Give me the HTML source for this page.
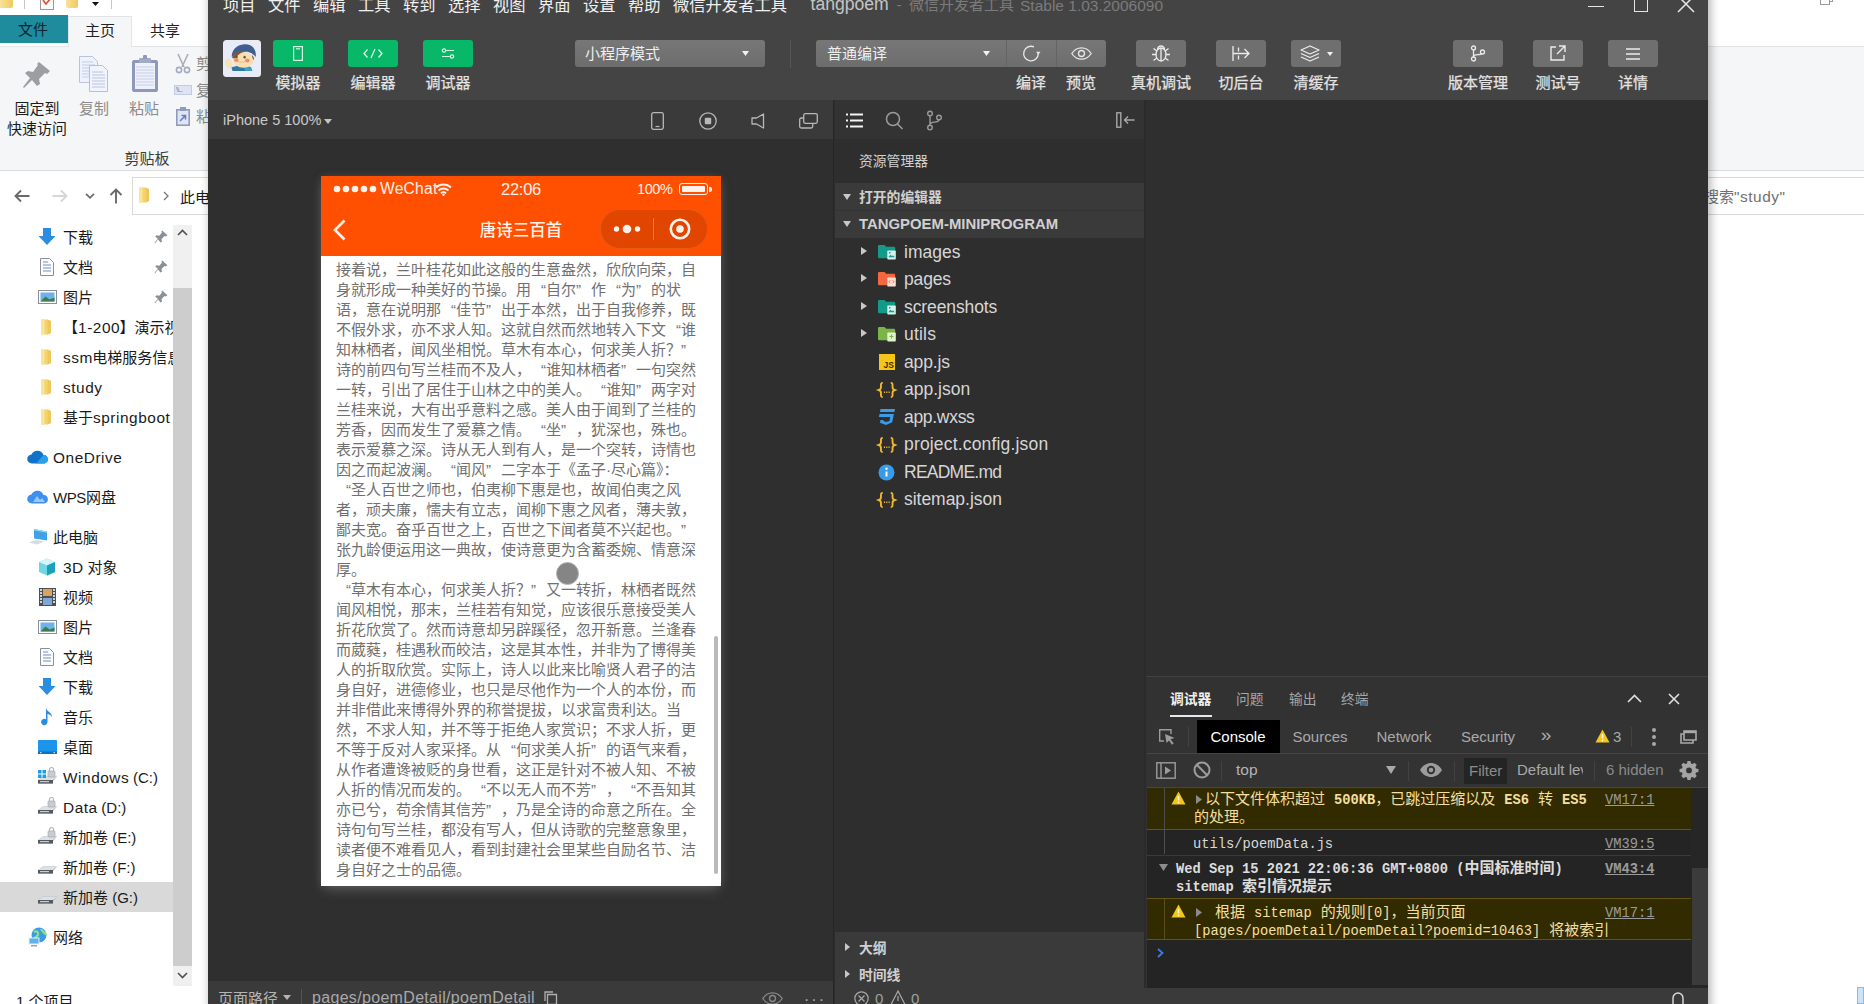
<!DOCTYPE html>
<html lang="zh-CN">
<head>
<meta charset="utf-8">
<title>tangpoem - 微信开发者工具</title>
<style>
*{box-sizing:border-box;margin:0;padding:0}
html,body{width:1864px;height:1004px;overflow:hidden;background:#fff}
body{position:relative;font-family:"Liberation Sans","Noto Sans CJK SC",sans-serif;font-size:15px;color:#222;line-height:1}
.a{position:absolute;white-space:nowrap}
.c{position:absolute;white-space:nowrap;transform:translateX(-50%);text-align:center}
svg{position:absolute;overflow:visible}
/* explorer */
.nav{position:absolute;left:0;height:30px;line-height:30px;font-size:15px;color:#1a1a1a;white-space:nowrap}
/* devtools */
#dw{position:absolute;left:208px;top:-30px;width:1500px;height:1064px;background:#2f2f2f;box-shadow:1.500px 0 9px 1px rgba(0,0,0,.31)}
.tb{position:absolute;top:40px;height:27px;border-radius:3px;background:#6f6f6f}
.tl{position:absolute;top:75px;font-size:15px;color:#e4e4e4;white-space:nowrap;transform:translateX(-50%);-webkit-text-stroke:.25px #e4e4e4}
.mn{position:absolute;top:-3.300px;font-size:16.3px;color:#f0f0f0;white-space:nowrap}
.tr{position:absolute;left:835px;width:310px;height:27.45px;line-height:27px;font-size:16.3px;color:#d6d6d6;white-space:nowrap}
.tr span{position:absolute;left:69px}
.pl{position:absolute;left:15px;height:20px;line-height:20px;white-space:nowrap;font-size:15px;color:#707070}
.l{letter-spacing:.55px;font-size:15.400px;margin-right:-.55px}
.q{display:inline-block;width:15px}
.ql{text-align:right}
.qr{text-align:left}
.cm{font-family:"Liberation Mono","Noto Sans CJK SC",monospace;font-size:13.74px}
.cl{position:absolute;white-space:nowrap;font-size:15px;line-height:18px;color:#f3dfa2;font-family:"Liberation Mono","Noto Sans CJK SC",monospace}
.vm{position:absolute;left:1605px;font-family:"Liberation Mono",monospace;font-size:13.74px;color:#9a9a9a;text-decoration:underline;white-space:nowrap}
</style>
</head>
<body>
<!-- ============ EXPLORER (background window) ============ -->
<div id="ex">
<div class="a" style="left:0;top:46px;width:1864px;height:125px;background:#f5f6f7;border-top:1px solid #e3e4e5;border-bottom:1px solid #dadbdc"></div>
<!-- quick access bar -->
<div class="a" style="left:0;top:0;width:13px;height:8px;background:linear-gradient(90deg,#f8e29a,#f0c95e);border-radius:0 0 2px 0"></div>
<div class="a" style="left:24px;top:0;width:1px;height:9px;background:#c8c8c8"></div>
<div class="a" style="left:40px;top:-6px;width:14px;height:16px;border:1px solid #9a9a9a;background:#fafafa"></div>
<svg style="left:42px;top:0" width="10" height="6" viewBox="0 0 10 6"><path d="M1 0l3 4 5-6" fill="none" stroke="#d8502d" stroke-width="1.6"/></svg>
<div class="a" style="left:66px;top:0;width:12px;height:8px;background:linear-gradient(90deg,#f8e29a,#f0c95e);border-radius:0 0 2px 2px"></div>
<svg style="left:91.500px;top:1.500px" width="7" height="4" viewBox="0 0 9 5"><path d="M0 0h9l-4.5 5z" fill="#111"/></svg>
<div class="a" style="left:111px;top:0;width:1px;height:9px;background:#c8c8c8"></div>
<!-- ribbon tabs -->
<div class="a" style="left:0;top:15px;width:68px;height:28px;background:#1e8c9c"></div>
<div class="c" style="left:33px;top:22px;font-size:15px;color:#0d2630">文件</div>
<div class="a" style="left:68px;top:16px;width:64px;height:31px;background:#f5f6f7;border:1px solid #e3e4e5;border-bottom:0"></div>
<div class="c" style="left:100px;top:23px;font-size:15px;color:#222">主页</div>
<div class="c" style="left:165px;top:23px;font-size:15px;color:#222">共享</div>
<!-- ribbon: pin -->
<svg style="left:22px;top:60px" width="30" height="30" viewBox="0 0 30 30"><path d="M17 2l11 9-3 3-2-1-6 6 1 5-3 2-5-6-8 8-1-1 7-9-5-5 3-2 5 1 5-7-1-1z" fill="#9b9fa3"/></svg>
<div class="c" style="left:37px;top:100.500px;color:#1c1c1c">固定到</div>
<div class="c" style="left:37px;top:120.500px;color:#1c1c1c">快速访问</div>
<!-- copy -->
<svg style="left:78px;top:55px" width="34" height="38" viewBox="0 0 34 38"><path d="M1.5 1.5h13l5 5v21h-18z" fill="#eef2fb" stroke="#b9c3db"/><path d="M4 7h11M4 10h13M4 13h13M4 16h13M4 19h13M4 22h13" stroke="#c3cde6" stroke-width="1"/><path d="M11.500 10.500h13l5 5v21h-18z" fill="#f1f4fc" stroke="#b4bfd9"/><path d="M14 17h11M14 20h13M14 23h13M14 26h13M14 29h13M14 32h13" stroke="#b7c3e0" stroke-width="1.2"/></svg>
<div class="c" style="left:94px;top:100.500px;color:#8c8c8c">复制</div>
<!-- paste -->
<svg style="left:131px;top:55px" width="28" height="38" viewBox="0 0 28 38"><rect x="1" y="5" width="26" height="32" rx="2" fill="#8e98b8"/><rect x="4" y="8" width="20" height="26" fill="#eef1fb"/><path d="M5 12h18M5 15h18M5 18h18M5 21h18M5 24h18M5 27h18M5 30h18" stroke="#c6cfe8" stroke-width="1"/><rect x="8" y="3" width="12" height="5" rx="1" fill="#a2abc6"/><rect x="12" y="0" width="4" height="4" rx="1" fill="#8e98b8"/></svg>
<div class="c" style="left:144px;top:100.500px;color:#8c8c8c">粘贴</div>
<!-- small: cut / copy path / paste shortcut -->
<svg style="left:175px;top:54px" width="16" height="20" viewBox="0 0 16 20"><path d="M3 0l6 13M13 0L7 13" stroke="#a9adb5" stroke-width="1.6" fill="none"/><circle cx="4" cy="16" r="2.6" fill="none" stroke="#a3abc4" stroke-width="1.6"/><circle cx="12" cy="16" r="2.6" fill="none" stroke="#a3abc4" stroke-width="1.6"/></svg>
<div class="a" style="left:196px;top:56px;color:#8c8c8c">剪</div>
<div class="a" style="left:174px;top:85px;width:18px;height:10px;background:#dfe4f4;border:1px solid #c3cbe3"></div>
<div class="a" style="left:176px;top:86px;font-size:8px;color:#7d86a8;letter-spacing:-1px">\\...</div>
<div class="a" style="left:196px;top:83px;color:#8c8c8c">复</div>
<svg style="left:176px;top:106px" width="14" height="20" viewBox="0 0 14 20"><rect x=".8" y="3.800" width="12.400" height="15.400" fill="#dfe5f5" stroke="#8f9bbd" stroke-width="1.6"/><rect x="4" y="1" width="6" height="4" fill="#8f9bbd"/><path d="M4 15l5-5M5.500 9.500H9.500V13.500" stroke="#5f7fc0" stroke-width="1.500" fill="none"/></svg>
<div class="a" style="left:196px;top:109px;color:#8c8c8c">粘</div>
<div class="c" style="left:147px;top:150.500px;color:#3c3c3c">剪贴板</div>
<!-- address row -->
<svg style="left:14px;top:189px" width="16" height="14" viewBox="0 0 16 14"><path d="M15.500 7H1.500M7 1.500L1.500 7 7 12.500" fill="none" stroke="#6a6a6a" stroke-width="1.900"/></svg>
<svg style="left:52px;top:189px" width="16" height="14" viewBox="0 0 16 14"><path d="M.5 7h14M9 1.500L14.500 7 9 12.500" fill="none" stroke="#d6d6d6" stroke-width="1.900"/></svg>
<svg style="left:85px;top:193px" width="10" height="6" viewBox="0 0 10 6"><path d="M1 .8l4 4 4-4" fill="none" stroke="#6a6a6a" stroke-width="1.700"/></svg>
<svg style="left:109px;top:188px" width="14" height="16" viewBox="0 0 14 16"><path d="M7 15.500V1.500M1.500 7L7 1.500 12.500 7" fill="none" stroke="#6a6a6a" stroke-width="1.900"/></svg>
<div class="a" style="left:132px;top:176.500px;width:1800px;height:38px;border:1px solid #d9d9d9;background:#fff"></div>
<svg style="left:138px;top:186px" width="12" height="18" viewBox="0 0 12 18"><path d="M1 1.500h6.500l3.500 1.500v12l-3.500 1.500H1z" fill="#f5d46e"/><path d="M1 1.500h3.500v15H1z" fill="#fae49a"/><path d="M7.500 1.500l3.500 1.500v12l-3.500 1.500z" fill="#efc85c"/></svg>
<svg style="left:163px;top:191px" width="7" height="10" viewBox="0 0 7 10"><path d="M1 1l4 4-4 4" fill="none" stroke="#777" stroke-width="1.300"/></svg>
<div class="a" style="left:180px;top:189.500px;color:#1a1a1a">此电脑</div>
<div class="a" style="left:1704px;top:189px;color:#707070;font-size:15px">搜索<span class="l">"study"</span></div>
<!-- top-right tiny icon -->
<div class="a" style="left:1820px;top:-6px;width:10px;height:11px;border:1px solid #999;background:#fff"></div>
<div class="a" style="left:1830px;top:-6px;width:3px;height:8px;border:1px solid #999;border-left:0;background:#fff"></div>
<div class="a" style="left:1857px;top:987px;width:7px;height:17px;background:#cce4f7;border:1px solid #8dbbe0"></div>
<!-- nav pane scrollbar -->
<div class="a" style="left:173px;top:225px;width:19px;height:761px;background:#f0f0f0"></div>
<div class="a" style="left:173px;top:288px;width:19px;height:678px;background:#cdcdcd"></div>
<svg style="left:177px;top:229px" width="11" height="7" viewBox="0 0 11 7"><path d="M1 6l4.500-4.500L10 6" fill="none" stroke="#505050" stroke-width="1.600"/></svg>
<svg style="left:177px;top:972px" width="11" height="7" viewBox="0 0 11 7"><path d="M1 1l4.500 4.500L10 1" fill="none" stroke="#505050" stroke-width="1.600"/></svg>
<div class="a" style="left:0;top:882px;width:173px;height:30px;background:#d9d9d9"></div>
<div class="a" style="left:16px;top:993.500px;color:#1a1a1a">1 个项目</div>
<svg style="left:38px;top:228px" width="18" height="18" viewBox="0 0 18 18"><path d="M5 0h8v8h4.500L9 17 .5 8H5z" fill="#2b8de0"/></svg>
<div class="nav" style="left:63px;top:222.5px;width:110px;overflow:hidden">下载</div>
<svg style="left:154px;top:230px" width="14" height="14" viewBox="0 0 12 12"><path d="M7 .5l4.500 4-1.500 1-1-.3-2.500 2.500.3 2.300-1.300.8-2-2.600L.8 11.500.5 11l2.800-3.500-2.300-2 1.300-1 2.200.5L6.800 2.300 6.300 1.500z" fill="#8b9096"/></svg>
<svg style="left:40px;top:258px" width="14" height="18" viewBox="0 0 14 18"><path d="M.5.5h9l4 4v13H.5z" fill="#fdfdfd" stroke="#8a9099"/><path d="M3 4h5M3 7h8M3 10h8M3 13h8" stroke="#6f8fc2" stroke-width="1.200"/></svg>
<div class="nav" style="left:63px;top:252.5px;width:110px;overflow:hidden">文档</div>
<svg style="left:154px;top:260px" width="14" height="14" viewBox="0 0 12 12"><path d="M7 .5l4.500 4-1.500 1-1-.3-2.500 2.500.3 2.300-1.300.8-2-2.600L.8 11.500.5 11l2.800-3.500-2.300-2 1.300-1 2.200.5L6.800 2.300 6.300 1.500z" fill="#8b9096"/></svg>
<svg style="left:38px;top:290px" width="19" height="14" viewBox="0 0 19 14"><rect x=".5" y=".5" width="18" height="13" fill="#fff" stroke="#8a9099"/><rect x="2.500" y="2.500" width="14" height="9" fill="#6fb2e8"/><path d="M2.500 11.500l5-5 4 3 5-2v4z" fill="#3c7d4e"/></svg>
<div class="nav" style="left:63px;top:282.5px;width:110px;overflow:hidden">图片</div>
<svg style="left:154px;top:290px" width="14" height="14" viewBox="0 0 12 12"><path d="M7 .5l4.500 4-1.500 1-1-.3-2.500 2.500.3 2.300-1.300.8-2-2.600L.8 11.500.5 11l2.800-3.500-2.300-2 1.300-1 2.200.5L6.800 2.300 6.300 1.500z" fill="#8b9096"/></svg>
<svg style="left:40px;top:318px" width="12" height="18" viewBox="0 0 12 18"><path d="M1 1.500h6.500l3.500 1.500v12l-3.500 1.500H1z" fill="#f5d46e"/><path d="M1 1.500h3.500v15H1z" fill="#fae49a"/><path d="M7.500 1.500l3.500 1.500v12l-3.500 1.500z" fill="#efc85c"/></svg>
<div class="nav" style="left:63px;top:312.5px;width:110px;overflow:hidden">【<span class="l">1-200</span>】演示视频</div>
<svg style="left:40px;top:348px" width="12" height="18" viewBox="0 0 12 18"><path d="M1 1.500h6.500l3.500 1.500v12l-3.500 1.500H1z" fill="#f5d46e"/><path d="M1 1.500h3.500v15H1z" fill="#fae49a"/><path d="M7.500 1.500l3.500 1.500v12l-3.500 1.500z" fill="#efc85c"/></svg>
<div class="nav" style="left:63px;top:342.5px;width:110px;overflow:hidden"><span class="l">ssm</span>电梯服务信息管理</div>
<svg style="left:40px;top:378px" width="12" height="18" viewBox="0 0 12 18"><path d="M1 1.500h6.500l3.500 1.500v12l-3.500 1.500H1z" fill="#f5d46e"/><path d="M1 1.500h3.500v15H1z" fill="#fae49a"/><path d="M7.500 1.500l3.500 1.500v12l-3.500 1.500z" fill="#efc85c"/></svg>
<div class="nav" style="left:63px;top:372.5px;width:110px;overflow:hidden"><span class="l">study</span></div>
<svg style="left:40px;top:408px" width="12" height="18" viewBox="0 0 12 18"><path d="M1 1.500h6.500l3.500 1.500v12l-3.500 1.500H1z" fill="#f5d46e"/><path d="M1 1.500h3.500v15H1z" fill="#fae49a"/><path d="M7.500 1.500l3.500 1.500v12l-3.500 1.500z" fill="#efc85c"/></svg>
<div class="nav" style="left:63px;top:402.5px;width:110px;overflow:hidden">基于<span class="l">springboot</span></div>
<svg style="left:27px;top:450px" width="22" height="14" viewBox="0 0 22 14"><path d="M5 13.500a4.500 4.500 0 01-.5-9A6.500 6.500 0 0116.500 5a4.300 4.300 0 011 8.500z" fill="#1272c8"/><path d="M9 13.500l7.500-8.500a4.300 4.300 0 011 8.500z" fill="#2aa0e8"/></svg>
<div class="nav" style="left:53px;top:442.5px;width:120px;overflow:hidden"><span class="l">OneDrive</span></div>
<svg style="left:27px;top:490px" width="22" height="14" viewBox="0 0 22 14"><path d="M5 13.500a4.500 4.500 0 01-.5-9A6.500 6.500 0 0116.500 5a4.300 4.300 0 011 8.500z" fill="#3f8ff0"/><path d="M6 12l4-6 3 4 2-2 3 4z" fill="#9dc8ff"/></svg>
<div class="nav" style="left:53px;top:482.5px;width:120px;overflow:hidden"><span style="letter-spacing:-.4px">WPS</span>网盘</div>
<svg style="left:29px;top:528px" width="22" height="18" viewBox="0 0 22 18"><path d="M5 1l13 2.500v9L5 10.500z" fill="#3fa2e6"/><path d="M5 1l13 2.500v1.200L5 2.200z" fill="#9ad6f8"/><path d="M0 14.500l7-2.500 8 1.500-7 3z" fill="#d5dbe1"/></svg>
<div class="nav" style="left:53px;top:522.5px;width:120px;overflow:hidden">此电脑</div>
<svg style="left:38px;top:558px" width="18" height="18" viewBox="0 0 18 18"><path d="M9 .5l8 3.500v10L9 17.500 1 14V4z" fill="#6fd6e6"/><path d="M9 .5l8 3.500L9 7.500 1 4z" fill="#d4f5fa"/><path d="M9 7.500l8-3.500v10l-8 3.500z" fill="#1aa2ba"/></svg>
<div class="nav" style="left:63px;top:552.5px;width:110px;overflow:hidden"><span class="l">3D</span> 对象</div>
<svg style="left:39px;top:588px" width="17" height="18" viewBox="0 0 17 18"><rect width="17" height="18" fill="#4a4f58"/><rect x="4" y="1" width="9" height="7" fill="#d9a45a"/><rect x="4" y="10" width="9" height="7" fill="#7fa7d6"/><path d="M1 2h2M1 5h2M1 8h2M1 11h2M1 14h2M14 2h2M14 5h2M14 8h2M14 11h2M14 14h2" stroke="#fff" stroke-width="1.500"/></svg>
<div class="nav" style="left:63px;top:582.5px;width:110px;overflow:hidden">视频</div>
<svg style="left:38px;top:620px" width="19" height="14" viewBox="0 0 19 14"><rect x=".5" y=".5" width="18" height="13" fill="#fff" stroke="#8a9099"/><rect x="2.500" y="2.500" width="14" height="9" fill="#6fb2e8"/><path d="M2.500 11.500l5-5 4 3 5-2v4z" fill="#3c7d4e"/></svg>
<div class="nav" style="left:63px;top:612.5px;width:110px;overflow:hidden">图片</div>
<svg style="left:40px;top:648px" width="14" height="18" viewBox="0 0 14 18"><path d="M.5.5h9l4 4v13H.5z" fill="#fdfdfd" stroke="#8a9099"/><path d="M3 4h5M3 7h8M3 10h8M3 13h8" stroke="#6f8fc2" stroke-width="1.200"/></svg>
<div class="nav" style="left:63px;top:642.5px;width:110px;overflow:hidden">文档</div>
<svg style="left:38px;top:678px" width="18" height="18" viewBox="0 0 18 18"><path d="M5 0h8v8h4.500L9 17 .5 8H5z" fill="#2b8de0"/></svg>
<div class="nav" style="left:63px;top:672.5px;width:110px;overflow:hidden">下载</div>
<svg style="left:41px;top:708px" width="12" height="18" viewBox="0 0 12 18"><path d="M5 0c1 4 6 4 6 9-1-2-3-3-4.500-3v8a3.200 3.200 0 11-1.500-2.700z" fill="#2b8de0"/></svg>
<div class="nav" style="left:63px;top:702.5px;width:110px;overflow:hidden">音乐</div>
<svg style="left:38px;top:740px" width="19" height="14" viewBox="0 0 19 14"><rect width="19" height="13" rx="1" fill="#1c95ea"/><rect x="0" y="11.500" width="19" height="2.500" fill="#0f6fc0"/><path d="M2 12.700h1.500M15.500 12.700H17" stroke="#e8f4ff" stroke-width="1"/></svg>
<div class="nav" style="left:63px;top:732.5px;width:110px;overflow:hidden">桌面</div>
<svg style="left:37px;top:767px" width="21" height="20" viewBox="0 0 21 20"><path d="M1 13l5-3.500h14l-4 4.500v2.500H1z" fill="#9a9fa5"/><path d="M1 13l5-3.500h14l-4 3.500z" fill="#dde0e4"/><rect x="1" y="13" width="15" height="3.500" fill="#555a61"/><rect x="3" y="14" width="9" height="1.200" fill="#c9cdd2"/><rect x="11" y="4" width="7" height="6" rx="1" fill="#c9ccd0" stroke="#9a9ea3" stroke-width=".6"/><path d="M12.500 4V2.500a2 2 0 014 0V4" fill="none" stroke="#b0b4b8" stroke-width="1.200"/><path d="M1 3h3.500v3.500H1zM5.500 3H9v3.500H5.500zM1 7.500h3.500V11H1zM5.500 7.500H9V11H5.500z" fill="#1aa0e8"/></svg>
<div class="nav" style="left:63px;top:762.5px;width:110px;overflow:hidden"><span class="l">Windows</span> (C:)</div>
<svg style="left:37px;top:797px" width="21" height="20" viewBox="0 0 21 20"><path d="M1 13l5-3.500h14l-4 4.500v2.500H1z" fill="#9a9fa5"/><path d="M1 13l5-3.500h14l-4 3.500z" fill="#dde0e4"/><rect x="1" y="13" width="15" height="3.500" fill="#555a61"/><rect x="3" y="14" width="9" height="1.200" fill="#c9cdd2"/><rect x="11" y="4" width="7" height="6" rx="1" fill="#c9ccd0" stroke="#9a9ea3" stroke-width=".6"/><path d="M12.500 4V2.500a2 2 0 014 0V4" fill="none" stroke="#b0b4b8" stroke-width="1.200"/></svg>
<div class="nav" style="left:63px;top:792.5px;width:110px;overflow:hidden"><span class="l">Data</span> (D:)</div>
<svg style="left:37px;top:827px" width="21" height="20" viewBox="0 0 21 20"><path d="M1 13l5-3.500h14l-4 4.500v2.500H1z" fill="#9a9fa5"/><path d="M1 13l5-3.500h14l-4 3.500z" fill="#dde0e4"/><rect x="1" y="13" width="15" height="3.500" fill="#555a61"/><rect x="3" y="14" width="9" height="1.200" fill="#c9cdd2"/><rect x="11" y="4" width="7" height="6" rx="1" fill="#c9ccd0" stroke="#9a9ea3" stroke-width=".6"/><path d="M12.500 4V2.500a2 2 0 014 0V4" fill="none" stroke="#b0b4b8" stroke-width="1.200"/></svg>
<div class="nav" style="left:63px;top:822.5px;width:110px;overflow:hidden">新加卷 (E:)</div>
<svg style="left:37px;top:857px" width="21" height="20" viewBox="0 0 21 20"><path d="M1 13l5-3.500h14l-4 4.500v2.500H1z" fill="#9a9fa5"/><path d="M1 13l5-3.500h14l-4 3.500z" fill="#dde0e4"/><rect x="1" y="13" width="15" height="3.500" fill="#555a61"/><rect x="3" y="14" width="9" height="1.200" fill="#c9cdd2"/></svg>
<div class="nav" style="left:63px;top:852.5px;width:110px;overflow:hidden">新加卷 (F:)</div>
<svg style="left:37px;top:887px" width="21" height="20" viewBox="0 0 21 20"><path d="M1 13l5-3.500h14l-4 4.500v2.500H1z" fill="#9a9fa5"/><path d="M1 13l5-3.500h14l-4 3.500z" fill="#dde0e4"/><rect x="1" y="13" width="15" height="3.500" fill="#555a61"/><rect x="3" y="14" width="9" height="1.200" fill="#c9cdd2"/></svg>
<div class="nav" style="left:63px;top:882.5px;width:110px;overflow:hidden">新加卷 (G:)</div>
<svg style="left:28px;top:927px" width="21" height="20" viewBox="0 0 21 20"><circle cx="11" cy="8" r="7.500" fill="#3b9be3"/><path d="M6 5c3-2 5 1 4 3s-4 2-4 5M13 2c1 3 4 3 5 6" stroke="#8fe08a" stroke-width="2.200" fill="none"/><rect x="1" y="11" width="10" height="6" fill="#5db2ee" stroke="#e8eef4"/><rect x="3" y="18" width="6" height="1.500" fill="#9aa3ad"/></svg>
<div class="nav" style="left:53px;top:922.5px;width:120px;overflow:hidden">网络</div>
</div>
<!-- ============ DEVTOOLS WINDOW ============ -->
<div id="dw"></div>
<!-- title/menu + toolbar background -->
<div class="a" style="left:208px;top:0;width:1500px;height:100px;background:#444"></div>
<div class="mn" style="left:223px">项目</div><div class="mn" style="left:268px">文件</div><div class="mn" style="left:313px">编辑</div><div class="mn" style="left:358px">工具</div><div class="mn" style="left:403px">转到</div><div class="mn" style="left:448px">选择</div><div class="mn" style="left:493px">视图</div><div class="mn" style="left:538px">界面</div><div class="mn" style="left:583px">设置</div><div class="mn" style="left:628px">帮助</div><div class="mn" style="left:673px">微信开发者工具</div>
<div class="a" style="left:810.500px;top:-4.500px;color:#c4c4c4;font-size:17.600px">tangpoem</div>
<div class="a" style="left:896.500px;top:-3px;color:#7b7b7b;font-size:15.500px">-</div>
<div class="a" style="left:909px;top:-3px;color:#7b7b7b;font-size:15px">微信开发者工具</div>
<div class="a" style="left:1020px;top:-2.500px;color:#7b7b7b;font-size:15.500px">Stable 1.03.2006090</div>
<!-- window controls -->
<div class="a" style="left:1588px;top:5.500px;width:16px;height:1.300px;background:#e6e6e6"></div>
<div class="a" style="left:1634px;top:-6px;width:14px;height:18px;border:1.500px solid #e6e6e6"></div>
<svg style="left:1678px;top:-4px" width="16" height="16" viewBox="0 0 16 16"><path d="M0 0l16 16M16 0L0 16" stroke="#e6e6e6" stroke-width="1.500"/></svg>
<!-- avatar -->
<div class="a" style="left:223px;top:40px;width:38px;height:37px;border-radius:3.500px;background:#e9ebf7;overflow:hidden">
<svg style="left:0;top:0" width="38" height="37" viewBox="0 0 38 37"><ellipse cx="5.800" cy="23.500" rx="3.600" ry="5.200" transform="rotate(-25 5.800 23.500)" fill="#f5e3b8"/><path d="M8.500 27.500c4-2.300 14-2.500 19.500-.3l1.300 3.800H9.500z" fill="#2f78a6"/><path d="M21 27c3 0 5.500.4 7 1l1.300 3h-7z" fill="#3fa0c2"/><ellipse cx="20.500" cy="20" rx="10.300" ry="7.800" fill="#f8dfb2"/><path d="M8.800 17c-.5-6 4-12 12.500-12.700C29 3.800 33.500 9 32.800 17c-1.500-2-3.500-3.500-6-4.500-5-2-12-1-18 4.500z" fill="#3f5f90"/><path d="M9 17.500c2.500-5 8.500-7.500 15-6.300-4.500.6-9 2.800-11.500 6.800-1 .8-2.500.6-3.500-.5z" fill="#8c5630"/><path d="M29 15c1.500 1 2.300 3 2 5-1-.8-2-2.500-2-5z" fill="#8c5630"/><ellipse cx="13.300" cy="20" rx="2.300" ry="1.900" fill="#e9906c"/><ellipse cx="24.300" cy="20.500" rx="2.300" ry="1.900" fill="#e9906c"/><ellipse cx="13.600" cy="16.800" rx="1.100" ry="1.400" fill="#5a5428"/><ellipse cx="21.600" cy="17.200" rx="1.100" ry="1.400" fill="#5a5428"/><path d="M14.500 21.500c2.500 1 5.500 1 8 0" stroke="#d9a07a" stroke-width=".6" fill="none"/></svg></div>
<!-- green buttons -->
<div class="tb" style="left:273px;width:50px;background:#08b768"></div>
<div class="tb" style="left:348px;width:50px;background:#08b768"></div>
<div class="tb" style="left:423px;width:50px;background:#08b768"></div>
<svg style="left:293px;top:46px" width="10" height="15" viewBox="0 0 10 15"><rect x=".6" y=".6" width="8.800" height="13.800" fill="none" stroke="#d6f5e4" stroke-width="1.200"/><path d="M3 2.800h4" stroke="#d6f5e4" stroke-width="1.200"/></svg>
<svg style="left:363px;top:48px" width="20" height="11" viewBox="0 0 20 11"><path d="M4.500 1.500L1 5.500l3.500 4M15.500 1.500L19 5.500l-3.500 4M12 1L8 10" fill="none" stroke="#d6f5e4" stroke-width="1.300"/></svg>
<svg style="left:441px;top:48px" width="14" height="11" viewBox="0 0 14 11"><circle cx="3" cy="2.500" r="1.700" fill="none" stroke="#d6f5e4" stroke-width="1.200"/><path d="M5 2.500h8M1 8.500h8" stroke="#d6f5e4" stroke-width="1.200"/><circle cx="11" cy="8.500" r="1.700" fill="none" stroke="#d6f5e4" stroke-width="1.200"/></svg>
<div class="tl" style="left:298px">模拟器</div><div class="tl" style="left:373px">编辑器</div><div class="tl" style="left:448px">调试器</div>
<!-- selects -->
<div class="tb" style="left:575px;width:190px;background:linear-gradient(#777,#6d6d6d)"></div>
<div class="a" style="left:585px;top:46px;font-size:15px;color:#efefef">小程序模式</div>
<svg style="left:742px;top:51px" width="7" height="5" viewBox="0 0 7 5"><path d="M0 0h7L3.500 5z" fill="#f2f2f2"/></svg>
<div class="a" style="left:790px;top:40px;width:1px;height:28px;background:#555"></div>
<div class="tb" style="left:816px;width:290px;background:linear-gradient(#777,#6d6d6d)"></div>
<div class="a" style="left:1006px;top:40px;width:1px;height:27px;background:#646464"></div>
<div class="a" style="left:1056px;top:40px;width:1px;height:27px;background:#646464"></div>
<div class="a" style="left:827px;top:46px;font-size:15px;color:#efefef">普通编译</div>
<svg style="left:983px;top:51px" width="7" height="5" viewBox="0 0 7 5"><path d="M0 0h7L3.500 5z" fill="#f2f2f2"/></svg>
<svg style="left:1022px;top:44px" width="19" height="19" viewBox="0 0 19 19"><path d="M12 2.900A7.300 7.300 0 1016.300 9.500" fill="none" stroke="#e8e8e8" stroke-width="1.300"/><path d="M14.200 7.800h4.200l-2.100 3.200z" fill="#e8e8e8"/></svg>
<svg style="left:1071px;top:47px" width="21" height="13" viewBox="0 0 21 13"><path d="M.8 6.500C4 1.500 8 .8 10.500.8s6.500.7 9.700 5.700c-3.200 5-7.200 5.700-9.700 5.700S4 11.500.8 6.500z" fill="none" stroke="#e8e8e8" stroke-width="1.300"/><circle cx="10.500" cy="6.500" r="3" fill="none" stroke="#e8e8e8" stroke-width="1.300"/></svg>
<div class="tl" style="left:1031px">编译</div><div class="tl" style="left:1081px">预览</div>
<!-- gray buttons -->
<div class="tb" style="left:1136px;width:50px"></div><div class="tb" style="left:1216px;width:50px"></div><div class="tb" style="left:1291px;width:50px"></div>
<div class="tb" style="left:1453px;width:50px"></div><div class="tb" style="left:1533px;width:50px"></div><div class="tb" style="left:1608px;width:50px"></div>
<svg style="left:1150px;top:44px" width="22" height="19" viewBox="0 0 22 19"><ellipse cx="11" cy="10.500" rx="5" ry="6.500" fill="none" stroke="#ececec" stroke-width="1.300"/><path d="M11 4v13M7.500 5.500a3.500 3.500 0 017 0M6.500 10.500H2M20 10.500h-4.500M6.800 7L3.500 4.500M15.200 7l3.300-2.500M6.800 14l-3.300 2.500M15.200 14l3.300 2.500" fill="none" stroke="#ececec" stroke-width="1.300"/></svg>
<svg style="left:1232px;top:46px" width="18" height="15" viewBox="0 0 18 15"><path d="M1 0v15M6.500 1.500v4M6.500 9.500v4M1 7.500h16M12.500 3L17 7.500 12.500 12" fill="none" stroke="#ececec" stroke-width="1.300"/></svg>
<svg style="left:1300px;top:45px" width="20" height="17" viewBox="0 0 20 17"><path d="M10 1l9 4-9 4-9-4zM1 8.500l9 4 9-4M1 12l9 4 9-4" fill="none" stroke="#ececec" stroke-width="1.300" stroke-linejoin="round"/></svg>
<svg style="left:1327px;top:52px" width="6" height="4" viewBox="0 0 6 4"><path d="M0 0h6L3 4z" fill="#f2f2f2"/></svg>
<svg style="left:1470px;top:45px" width="16" height="17" viewBox="0 0 16 17"><circle cx="3.500" cy="3" r="2" fill="none" stroke="#ececec" stroke-width="1.300"/><circle cx="3.500" cy="14" r="2" fill="none" stroke="#ececec" stroke-width="1.300"/><circle cx="12.500" cy="7" r="2" fill="none" stroke="#ececec" stroke-width="1.300"/><path d="M3.500 5v7M3.500 12c0-4 7-1 8-3.500" fill="none" stroke="#ececec" stroke-width="1.300"/></svg>
<svg style="left:1550px;top:45px" width="16" height="16" viewBox="0 0 16 16"><path d="M6 2H1v13h13v-5M9 1h6v6M15 1L7 9" fill="none" stroke="#ececec" stroke-width="1.400"/></svg>
<svg style="left:1626px;top:48px" width="14" height="12" viewBox="0 0 14 12"><path d="M0 1h14M0 6h14M0 11h14" stroke="#ececec" stroke-width="1.400"/></svg>
<div class="tl" style="left:1161px">真机调试</div><div class="tl" style="left:1241px">切后台</div><div class="tl" style="left:1316px">清缓存</div>
<div class="tl" style="left:1478px">版本管理</div><div class="tl" style="left:1558px">测试号</div><div class="tl" style="left:1633px">详情</div>
<!-- simulator header -->
<div class="a" style="left:208px;top:100px;width:625px;height:39px;background:#3a3a3a"></div>
<div class="a" style="left:833px;top:100px;width:2px;height:904px;background:#2e2e2e;border-left:1px solid #262626"></div>
<div class="a" style="left:223px;top:113px;font-size:14.500px;color:#c9c9c9">iPhone 5 100%</div>
<svg style="left:324px;top:119px" width="8" height="5" viewBox="0 0 8 5"><path d="M0 0h8L4 5z" fill="#c4c4c4"/></svg>
<svg style="left:651px;top:112px" width="13" height="18" viewBox="0 0 13 18"><rect x=".7" y=".7" width="11.600" height="16.600" rx="1.800" fill="none" stroke="#b8b8b8" stroke-width="1.300"/><path d="M4.500 14.500h4" stroke="#b8b8b8" stroke-width="1.200"/></svg>
<svg style="left:699px;top:112px" width="18" height="18" viewBox="0 0 18 18"><circle cx="9" cy="9" r="8.200" fill="none" stroke="#b8b8b8" stroke-width="1.300"/><rect x="5.800" y="5.800" width="6.400" height="6.400" rx="1" fill="#b8b8b8"/></svg>
<svg style="left:751px;top:113px" width="14" height="16" viewBox="0 0 14 16"><path d="M12.500 1v14L5.500 11H1V5h4.500z" fill="none" stroke="#b8b8b8" stroke-width="1.300" stroke-linejoin="round"/></svg>
<svg style="left:799px;top:113px" width="19" height="16" viewBox="0 0 19 16"><rect x="4.700" y=".7" width="13.600" height="9.600" rx="1.500" fill="none" stroke="#b8b8b8" stroke-width="1.300"/><path d="M4.500 5H2.200A1.500 1.500 0 00.700 6.500v7A1.500 1.500 0 002.200 15h10a1.500 1.500 0 001.500-1.500V10.500" fill="none" stroke="#b8b8b8" stroke-width="1.300"/></svg>
<!-- simulator status bar -->
<div class="a" style="left:208px;top:981px;width:625px;height:23px;background:#3a3a3a"></div>
<div class="a" style="left:218px;top:991px;font-size:15px;color:#b5b5b5">页面路径</div>
<svg style="left:283px;top:995px" width="8" height="5" viewBox="0 0 8 5"><path d="M0 0h8L4 5z" fill="#b5b5b5"/></svg>
<div class="a" style="left:301px;top:989px;width:1px;height:15px;background:#555"></div>
<div class="a" style="left:312px;top:990px;font-size:16px;color:#a9a9a9;letter-spacing:.32px">pages/poemDetail/poemDetail</div>
<svg style="left:544px;top:991px" width="14" height="14" viewBox="0 0 14 14"><path d="M3.500 3.500h9v10h-9zM1 10V1h8" fill="none" stroke="#b0b0b0" stroke-width="1.300"/></svg>
<svg style="left:762px;top:992px" width="21" height="12" viewBox="0 0 21 12"><path d="M.8 6.500C4 1.500 8 .8 10.500.8s6.500.7 9.700 5.700c-3.200 5-7.200 5.700-9.700 5.700S4 11.500.8 6.500z" fill="none" stroke="#8a8a8a" stroke-width="1.300"/><circle cx="10.500" cy="6.500" r="3" fill="none" stroke="#8a8a8a" stroke-width="1.300"/></svg>
<div class="a" style="left:804px;top:992px;font-size:16px;color:#aaa;letter-spacing:2px">···</div>
<!-- ===== editor sidebar ===== -->
<div class="a" style="left:835px;top:100px;width:309px;height:904px;background:#2e2e2e"></div>
<div class="a" style="left:835px;top:100px;width:309px;height:39px;background:#333"></div>
<div class="a" style="left:1145px;top:100px;width:563px;height:578px;background:#2f2f2f"></div>
<div class="a" style="left:1144px;top:100px;width:2px;height:904px;background:#2b2b2b"></div>
<svg style="left:846px;top:113px" width="17" height="15" viewBox="0 0 17 15"><path d="M4 1.500h13M4 7.500h13M4 13.500h13" stroke="#f4f4f4" stroke-width="1.800"/><path d="M0 1.500h2M0 7.500h2M0 13.500h2" stroke="#f4f4f4" stroke-width="2"/></svg>
<svg style="left:885px;top:111px" width="19" height="19" viewBox="0 0 19 19"><circle cx="8" cy="8" r="6.500" fill="none" stroke="#9a9a9a" stroke-width="1.500"/><path d="M12.500 13l5 5" stroke="#9a9a9a" stroke-width="1.600"/></svg>
<svg style="left:926px;top:110px" width="17" height="21" viewBox="0 0 17 21"><circle cx="4" cy="3.500" r="2.300" fill="none" stroke="#9a9a9a" stroke-width="1.400"/><circle cx="4" cy="17.500" r="2.300" fill="none" stroke="#9a9a9a" stroke-width="1.400"/><circle cx="13" cy="7.500" r="2.300" fill="none" stroke="#9a9a9a" stroke-width="1.400"/><path d="M4 6v9M4 15c0-5 8-1 9-5" fill="none" stroke="#9a9a9a" stroke-width="1.400"/></svg>
<svg style="left:1116px;top:112px" width="19" height="16" viewBox="0 0 19 16"><rect x=".8" y=".8" width="4" height="14.400" fill="none" stroke="#a8a8a8" stroke-width="1.400"/><path d="M2.800 4v0M2.800 8v0" stroke="#a8a8a8"/><path d="M18.500 8H8.500M12 4.500L8.500 8l3.500 3.500" fill="none" stroke="#a8a8a8" stroke-width="1.400"/></svg>
<div class="a" style="left:859px;top:155px;font-size:13.800px;color:#d0d0d0">资源管理器</div>
<div class="a" style="left:835px;top:183px;width:309px;height:27px;background:#3a3a3a"></div>
<div class="a" style="left:835px;top:210px;width:309px;height:28px;background:#3a3a3a;border-top:1px solid #333"></div>
<svg style="left:843px;top:194px" width="8" height="6" viewBox="0 0 8 6"><path d="M0 0h8L4 6z" fill="#c8c8c8"/></svg>
<svg style="left:843px;top:221px" width="8" height="6" viewBox="0 0 8 6"><path d="M0 0h8L4 6z" fill="#c8c8c8"/></svg>
<div class="a" style="left:859px;top:191px;font-size:13.800px;color:#d0d0d0;font-weight:bold">打开的编辑器</div>
<div class="a" style="left:859px;top:216.500px;font-size:14.900px;color:#d0d0d0;font-weight:bold;letter-spacing:0">TANGPOEM-MINIPROGRAM</div>
<svg style="left:861px;top:247px" width="6" height="8" viewBox="0 0 6 8"><path d="M0 0v8l6-4z" fill="#c8c8c8"/></svg>
<svg style="left:878px;top:244px" width="19" height="17" viewBox="0 0 19 17"><path d="M1.200 1h5.300l1.700 1.800H16a1.200 1.200 0 011.200 1.200V13a1.200 1.200 0 01-1.200 1.200H1.200A1.200 1.200 0 010 13V2.200A1.200 1.200 0 011.200 1z" fill="#149a88"/><rect x="9.300" y="6.500" width="8.500" height="9" rx=".8" fill="#d5f2ec"/><path d="M10.300 13.200l2.200-2.500 1.500 1.500 1-1 1.800 2z" fill="#149a88"/><rect x="11" y="8" width="1.500" height="1.500" fill="#149a88"/></svg>
<div class="a" style="left:904px;top:244px;font-size:17.500px;color:#d6d6d6;letter-spacing:0px">images</div>
<svg style="left:861px;top:274px" width="6" height="8" viewBox="0 0 6 8"><path d="M0 0v8l6-4z" fill="#c8c8c8"/></svg>
<svg style="left:878px;top:271px" width="19" height="17" viewBox="0 0 19 17"><path d="M1.200 1h5.300l1.700 1.800H16a1.200 1.200 0 011.200 1.200V13a1.200 1.200 0 01-1.200 1.200H1.200A1.200 1.200 0 010 13V2.200A1.200 1.200 0 011.200 1z" fill="#f4683f"/><rect x="9.300" y="6.500" width="8.500" height="9" rx=".8" fill="#ffddd0"/><path d="M12.300 9.200L11 10.700l1.300 1.500M14.700 9.200l1.300 1.500-1.300 1.500" stroke="#f4683f" stroke-width=".9" fill="none"/></svg>
<div class="a" style="left:904px;top:271px;font-size:17.500px;color:#d6d6d6;letter-spacing:-0.15px">pages</div>
<svg style="left:861px;top:302px" width="6" height="8" viewBox="0 0 6 8"><path d="M0 0v8l6-4z" fill="#c8c8c8"/></svg>
<svg style="left:878px;top:299px" width="19" height="17" viewBox="0 0 19 17"><path d="M1.200 1h5.300l1.700 1.800H16a1.200 1.200 0 011.200 1.200V13a1.200 1.200 0 01-1.200 1.200H1.200A1.200 1.200 0 010 13V2.200A1.200 1.200 0 011.200 1z" fill="#149a88"/><rect x="9.300" y="6.500" width="8.500" height="9" rx=".8" fill="#d5f2ec"/><path d="M10.300 13.200l2.200-2.500 1.500 1.500 1-1 1.800 2z" fill="#149a88"/><rect x="11" y="8" width="1.500" height="1.500" fill="#149a88"/></svg>
<div class="a" style="left:904px;top:299px;font-size:17.500px;color:#d6d6d6;letter-spacing:-0.1px">screenshots</div>
<svg style="left:861px;top:329px" width="6" height="8" viewBox="0 0 6 8"><path d="M0 0v8l6-4z" fill="#c8c8c8"/></svg>
<svg style="left:878px;top:326px" width="19" height="17" viewBox="0 0 19 17"><path d="M1.200 1h5.300l1.700 1.800H16a1.200 1.200 0 011.200 1.200V13a1.200 1.200 0 01-1.200 1.200H1.200A1.200 1.200 0 010 13V2.200A1.200 1.200 0 011.200 1z" fill="#7cb547"/><rect x="9.300" y="6.500" width="8.500" height="9" rx=".8" fill="#e2f2cc"/><path d="M13.500 8.500v4M11.500 10.500h4" stroke="#7cb547" stroke-width="1.100"/></svg>
<div class="a" style="left:904px;top:326px;font-size:17.500px;color:#d6d6d6;letter-spacing:0.2px">utils</div>
<svg style="left:879px;top:354px" width="16" height="16" viewBox="0 0 16 16"><rect width="16" height="16" fill="#f5c518"/><text x="4.500" y="14" font-family="Liberation Sans,sans-serif" font-size="8.500" font-weight="bold" fill="#3a3000">JS</text></svg>
<div class="a" style="left:904px;top:354px;font-size:17.500px;color:#d6d6d6;letter-spacing:-0.13px">app.js</div>
<svg style="left:877px;top:381.5px" width="19.500" height="16" viewBox="0 0 21 18"><path d="M6 1C3.500 1 4 3 4 5.500S3 8.500 1.500 9C3 9.500 4 10 4 12.500S3.500 17 6 17M15 1c2.500 0 2 2 2 4.500s1 3 2.500 3.500c-1.500.5-2.500 1-2.500 3.500s.5 4.500-2 4.500" fill="none" stroke="#f2b830" stroke-width="2.100"/><path d="M7.300 11.500h1.300M9.900 11.500h1.300M12.500 11.500h1.300" stroke="#f2b830" stroke-width="1.600"/></svg>
<div class="a" style="left:904px;top:381px;font-size:17.500px;color:#d6d6d6;letter-spacing:0px">app.json</div>
<svg style="left:878px;top:409px" width="17" height="16" viewBox="0 0 17 16"><path d="M2.500 0h14.500l-.6 3H1.900zM1.500 5h14.400l-1.700 8.300L8 16l-6-2.300.5-2.700h3l-.2 1.100 2.900 1 3.300-1.100.6-4H.9z" fill="#3a9be8"/></svg>
<div class="a" style="left:904px;top:409px;font-size:17.500px;color:#d6d6d6;letter-spacing:-0.3px">app.wxss</div>
<svg style="left:877px;top:436.5px" width="19.500" height="16" viewBox="0 0 21 18"><path d="M6 1C3.500 1 4 3 4 5.500S3 8.500 1.500 9C3 9.500 4 10 4 12.500S3.500 17 6 17M15 1c2.500 0 2 2 2 4.500s1 3 2.500 3.500c-1.500.5-2.500 1-2.500 3.500s.5 4.500-2 4.500" fill="none" stroke="#f2b830" stroke-width="2.100"/><path d="M7.300 11.500h1.300M9.900 11.500h1.300M12.500 11.500h1.300" stroke="#f2b830" stroke-width="1.600"/></svg>
<div class="a" style="left:904px;top:436px;font-size:17.500px;color:#d6d6d6;letter-spacing:0.17px">project.config.json</div>
<svg style="left:878px;top:464px" width="17" height="17" viewBox="0 0 17 17"><circle cx="8.500" cy="8.500" r="8" fill="#3a9be8"/><path d="M8.500 7.500v5" stroke="#fff" stroke-width="2"/><circle cx="8.500" cy="4.700" r="1.200" fill="#fff"/></svg>
<div class="a" style="left:904px;top:464px;font-size:17.500px;color:#d6d6d6;letter-spacing:-0.75px">README.md</div>
<svg style="left:877px;top:491.5px" width="19.500" height="16" viewBox="0 0 21 18"><path d="M6 1C3.500 1 4 3 4 5.500S3 8.500 1.500 9C3 9.500 4 10 4 12.500S3.500 17 6 17M15 1c2.500 0 2 2 2 4.500s1 3 2.500 3.500c-1.500.5-2.500 1-2.500 3.500s.5 4.500-2 4.500" fill="none" stroke="#f2b830" stroke-width="2.100"/><path d="M7.300 11.500h1.300M9.900 11.500h1.300M12.500 11.500h1.300" stroke="#f2b830" stroke-width="1.600"/></svg>
<div class="a" style="left:904px;top:491px;font-size:17.500px;color:#d6d6d6;letter-spacing:-0.03px">sitemap.json</div>

<!-- outline / timeline -->
<div class="a" style="left:835px;top:932px;width:309px;height:72px;background:#3a3a3a"></div>
<svg style="left:845px;top:943px" width="5" height="8" viewBox="0 0 5 8"><path d="M0 0v8l5-4z" fill="#c8c8c8"/></svg>
<svg style="left:845px;top:970px" width="5" height="8" viewBox="0 0 5 8"><path d="M0 0v8l5-4z" fill="#c8c8c8"/></svg>
<div class="a" style="left:859px;top:941.500px;font-size:13.800px;color:#d0d0d0;font-weight:bold">大纲</div>
<div class="a" style="left:859px;top:968.500px;font-size:13.800px;color:#d0d0d0;font-weight:bold">时间线</div>
<div class="a" style="left:1144px;top:988px;width:564px;height:16px;background:#3a3a3a"></div>
<svg style="left:854px;top:991px" width="15" height="15" viewBox="0 0 15 15"><circle cx="7.500" cy="7.500" r="6.700" fill="none" stroke="#aaa" stroke-width="1.200"/><path d="M4.500 4.500l6 6M10.500 4.500l-6 6" stroke="#aaa" stroke-width="1.200"/></svg>
<div class="a" style="left:875px;top:991px;font-size:15px;color:#a0a0a0">0</div>
<svg style="left:890px;top:990px" width="16" height="15" viewBox="0 0 16 15"><path d="M8 1l7 13.500H1z" fill="none" stroke="#aaa" stroke-width="1.200"/><path d="M8 6v5" stroke="#aaa" stroke-width="1.200"/></svg>
<div class="a" style="left:911px;top:991px;font-size:15px;color:#a0a0a0">0</div>
<svg style="left:1671px;top:991px" width="14" height="14" viewBox="0 0 14 14"><path d="M2 14V7a5 5 0 0110 0v7" fill="none" stroke="#ddd" stroke-width="1.400"/></svg>
<!-- ===== phone simulator ===== -->
<div class="a" style="left:321px;top:176px;width:400px;height:710px;background:#fff;box-shadow:0 5px 12px -2px rgba(150,150,150,.42),0 0 8px rgba(120,120,120,.18);overflow:hidden">
<div class="a" style="left:0;top:0;width:400px;height:80px;background:#ff4f00"></div>
<svg style="left:12px;top:9px" width="44" height="8" viewBox="0 0 44 8"><circle cx="4" cy="4" r="3.300" fill="#fff2ea"/><circle cx="13" cy="4" r="3.300" fill="#fff2ea"/><circle cx="22" cy="4" r="3.300" fill="#fff2ea"/><circle cx="31" cy="4" r="3.300" fill="#fff2ea"/><circle cx="40" cy="4" r="3.300" fill="#fff2ea"/></svg>
<div class="a" style="left:59px;top:4.500px;font-size:15.600px;color:#fff2ea;letter-spacing:.25px">WeChat</div>
<svg style="left:114px;top:7px" width="17" height="13" viewBox="0 0 17 13"><path d="M1 4.500a11 11 0 0115 0M3.500 7.500a7.300 7.300 0 0110 0M6 10.300a3.600 3.600 0 015 0" fill="none" stroke="#fff2ea" stroke-width="1.900"/><circle cx="8.500" cy="11.800" r="1.200" fill="#fff2ea"/></svg>
<div class="c" style="left:200px;top:5px;font-size:16.500px;color:#fff2ea;letter-spacing:-.3px">22:06</div>
<div class="a" style="left:316px;top:6px;font-size:14.500px;color:#fff2ea;letter-spacing:-.4px">100%</div>
<div class="a" style="left:358px;top:7px;width:29px;height:12px;border:1.500px solid #fff2ea;border-radius:3px"></div><div class="a" style="left:361px;top:10px;width:23px;height:6px;background:#fff2ea;border-radius:1px"></div><div class="a" style="left:388px;top:10.500px;width:2.500px;height:5px;background:#fff2ea;border-radius:0 2px 2px 0"></div>
<svg style="left:12px;top:43px" width="13" height="22" viewBox="0 0 13 22"><path d="M11.500 1.500L2 11l9.500 9.500" fill="none" stroke="#fff2ea" stroke-width="2.600"/></svg>
<div class="c" style="left:200px;top:46px;font-size:16.500px;color:#fff2ea;font-weight:500">唐诗三百首</div>
<div class="a" style="left:279px;top:33px;width:108px;height:40px;border-radius:20px;background:#e04600;border:1px solid #e85a1a"></div>
<div class="a" style="left:332px;top:42px;width:1px;height:22px;background:#f07a45"></div>
<svg style="left:292px;top:48px" width="28" height="10" viewBox="0 0 28 10"><circle cx="3.500" cy="5" r="2.700" fill="#fff2ea"/><circle cx="14" cy="5" r="4.300" fill="#fff2ea"/><circle cx="24.500" cy="5" r="2.700" fill="#fff2ea"/></svg>
<svg style="left:348px;top:42px" width="22" height="22" viewBox="0 0 22 22"><circle cx="11" cy="11" r="9.200" fill="none" stroke="#fff2ea" stroke-width="2.600"/><circle cx="11" cy="11" r="3.800" fill="#fff2ea"/></svg>
<div class="pl" style="top:84px">接着说，兰叶桂花如此这般的生意盎然，欣欣向荣，自</div>
<div class="pl" style="top:104px">身就形成一种美好的节操。用<span class="q ql">“</span>自尔<span class="q qr">”</span>作<span class="q ql">“</span>为<span class="q qr">”</span>的状</div>
<div class="pl" style="top:124px">语，意在说明那<span class="q ql">“</span>佳节<span class="q qr">”</span>出于本然，出于自我修养，既</div>
<div class="pl" style="top:144px">不假外求，亦不求人知。这就自然而然地转入下文<span class="q ql">“</span>谁</div>
<div class="pl" style="top:164px">知林栖者，闻风坐相悦。草木有本心，何求美人折？<span class="q qr">”</span></div>
<div class="pl" style="top:184px">诗的前四句写兰桂而不及人，<span class="q ql">“</span>谁知林栖者<span class="q qr">”</span>一句突然</div>
<div class="pl" style="top:204px">一转，引出了居住于山林之中的美人。<span class="q ql">“</span>谁知<span class="q qr">”</span>两字对</div>
<div class="pl" style="top:224px">兰桂来说，大有出乎意料之感。美人由于闻到了兰桂的</div>
<div class="pl" style="top:244px">芳香，因而发生了爱慕之情。<span class="q ql">“</span>坐<span class="q qr">”</span>，犹深也，殊也。</div>
<div class="pl" style="top:264px">表示爱慕之深。诗从无人到有人，是一个突转，诗情也</div>
<div class="pl" style="top:284px">因之而起波澜。<span class="q ql">“</span>闻风<span class="q qr">”</span>二字本于《孟子·尽心篇》：</div>
<div class="pl" style="top:304px"><span class="q ql">“</span>圣人百世之师也，伯夷柳下惠是也，故闻伯夷之风</div>
<div class="pl" style="top:324px">者，顽夫廉，懦夫有立志，闻柳下惠之风者，薄夫敦，</div>
<div class="pl" style="top:344px">鄙夫宽。奋乎百世之上，百世之下闻者莫不兴起也。<span class="q qr">”</span></div>
<div class="pl" style="top:364px">张九龄便运用这一典故，使诗意更为含蓄委婉、情意深</div>
<div class="pl" style="top:384px">厚。</div>
<div class="pl" style="top:404px"><span class="q ql">“</span>草木有本心，何求美人折？<span class="q qr">”</span>又一转折，林栖者既然</div>
<div class="pl" style="top:424px">闻风相悦，那末，兰桂若有知觉，应该很乐意接受美人</div>
<div class="pl" style="top:444px">折花欣赏了。然而诗意却另辟蹊径，忽开新意。兰逢春</div>
<div class="pl" style="top:464px">而葳蕤，桂遇秋而皎洁，这是其本性，并非为了博得美</div>
<div class="pl" style="top:484px">人的折取欣赏。实际上，诗人以此来比喻贤人君子的洁</div>
<div class="pl" style="top:504px">身自好，进德修业，也只是尽他作为一个人的本份，而</div>
<div class="pl" style="top:524px">并非借此来博得外界的称誉提拔，以求富贵利达。当</div>
<div class="pl" style="top:544px">然，不求人知，并不等于拒绝人家赏识；不求人折，更</div>
<div class="pl" style="top:564px">不等于反对人家采择。从<span class="q ql">“</span>何求美人折<span class="q qr">”</span>的语气来看，</div>
<div class="pl" style="top:584px">从作者遭谗被贬的身世看，这正是针对不被人知、不被</div>
<div class="pl" style="top:604px">人折的情况而发的。<span class="q ql">“</span>不以无人而不芳<span class="q qr">”</span>，<span class="q ql">“</span>不吾知其</div>
<div class="pl" style="top:624px">亦已兮，苟余情其信芳<span class="q qr">”</span>，乃是全诗的命意之所在。全</div>
<div class="pl" style="top:644px">诗句句写兰桂，都没有写人，但从诗歌的完整意象里，</div>
<div class="pl" style="top:664px">读者便不难看见人，看到封建社会里某些自励名节、洁</div>
<div class="pl" style="top:684px">身自好之士的品德。</div>
<div class="a" style="left:393px;top:460px;width:4px;height:238px;background:#b9b9b9;border-radius:2px"></div>
<div class="a" style="left:235px;top:386px;width:23px;height:23px;border-radius:50%;background:#858585;border:1.500px solid #b4b4b4"></div>
</div>
<!-- ===== debugger panel ===== -->
<div class="a" style="left:1146px;top:676px;width:562px;height:312px;background:#323232;border-top:1px solid #424242"></div>
<div class="a" style="left:1170px;top:693px;font-size:13.800px;color:#f0f0f0;font-weight:bold">调试器</div>
<div class="a" style="left:1170px;top:715px;width:42px;height:1.500px;background:#e8e8e8"></div>
<div class="a" style="left:1236px;top:693px;font-size:13.800px;color:#a6a6a6">问题</div>
<div class="a" style="left:1289px;top:693px;font-size:13.800px;color:#a6a6a6">输出</div>
<div class="a" style="left:1341px;top:693px;font-size:13.800px;color:#a6a6a6">终端</div>
<svg style="left:1627px;top:694px" width="15" height="9" viewBox="0 0 15 9"><path d="M1 8l6.500-6.500L14 8" fill="none" stroke="#e0e0e0" stroke-width="1.600"/></svg>
<svg style="left:1668px;top:693px" width="12" height="12" viewBox="0 0 12 12"><path d="M1 1l10 10M11 1L1 11" stroke="#e0e0e0" stroke-width="1.600"/></svg>
<!-- devtools tab strip -->
<div class="a" style="left:1147px;top:720px;width:561px;height:34px;background:#333;border-bottom:1px solid #454545"></div>
<svg style="left:1158px;top:728px" width="19" height="18" viewBox="0 0 19 18"><path d="M13 6V1.700H1.700V13H6" fill="none" stroke="#9c9c9c" stroke-width="1.400" stroke-dasharray="0"/><path d="M7 6l9.500 4-4 1.300 3.200 4.200-1.700 1.200-3-4.300L8.500 15z" fill="#9c9c9c"/></svg>
<div class="a" style="left:1188px;top:727px;width:1px;height:20px;background:#424242"></div>
<div class="a" style="left:1197px;top:720px;width:83px;height:33px;background:#000"></div>
<div class="c" style="left:1238px;top:729px;font-size:15px;color:#fff">Console</div>
<div class="c" style="left:1320px;top:729px;font-size:15px;color:#a9a9a9">Sources</div>
<div class="c" style="left:1404px;top:729px;font-size:15px;color:#a9a9a9">Network</div>
<div class="c" style="left:1488px;top:729px;font-size:15px;color:#a9a9a9">Security</div>
<div class="c" style="left:1546px;top:725px;font-size:19px;color:#a9a9a9">»</div>
<svg style="left:1595px;top:729px" width="15" height="14" viewBox="0 0 15 14"><path d="M7.500 .5l7 13H.5z" fill="#f5c518"/><path d="M7.500 5v4.500" stroke="#fff8dc" stroke-width="1.600"/><circle cx="7.500" cy="11.500" r=".9" fill="#fff8dc"/></svg>
<div class="a" style="left:1613px;top:729px;font-size:15px;color:#a9a9a9">3</div>
<div class="a" style="left:1631px;top:727px;width:1px;height:20px;background:#424242"></div>
<svg style="left:1652px;top:728px" width="4" height="18" viewBox="0 0 4 18"><circle cx="2" cy="2" r="2" fill="#a9a9a9"/><circle cx="2" cy="9" r="2" fill="#a9a9a9"/><circle cx="2" cy="16" r="2" fill="#a9a9a9"/></svg>
<svg style="left:1680px;top:730px" width="17" height="14" viewBox="0 0 17 14"><path d="M4 1h12v9H4zM4 4H1v9h12v-3" fill="none" stroke="#a9a9a9" stroke-width="1.600"/><path d="M4 2h12" stroke="#a9a9a9" stroke-width="2.400"/></svg>
<!-- filter row -->
<div class="a" style="left:1147px;top:754px;width:561px;height:34px;background:#333;border-bottom:1px solid #454545"></div>
<svg style="left:1156px;top:762px" width="20" height="17" viewBox="0 0 20 17"><rect x=".8" y=".8" width="18.400" height="15.400" fill="none" stroke="#9c9c9c" stroke-width="1.400"/><path d="M5 1v15" stroke="#9c9c9c" stroke-width="1.400"/><path d="M9 4.500v8l6-4z" fill="#9c9c9c"/></svg>
<svg style="left:1193px;top:761px" width="18" height="18" viewBox="0 0 18 18"><circle cx="9" cy="9" r="7.500" fill="none" stroke="#9c9c9c" stroke-width="2"/><path d="M3.800 3.800l10.400 10.400" stroke="#9c9c9c" stroke-width="2"/></svg>
<div class="a" style="left:1221px;top:761px;width:1px;height:20px;background:#424242"></div>
<div class="a" style="left:1236px;top:762px;font-size:15.500px;color:#b4b4b4">top</div>
<svg style="left:1386px;top:766px" width="10" height="8" viewBox="0 0 10 8"><path d="M0 0h10L5 8z" fill="#a9a9a9"/></svg>
<div class="a" style="left:1408px;top:761px;width:1px;height:20px;background:#424242"></div>
<svg style="left:1420px;top:763px" width="22" height="14" viewBox="0 0 22 14"><path d="M0 7C3 2 7 0 11 0s8 2 11 7c-3 5-7 7-11 7S3 12 0 7z" fill="#9c9c9c"/><circle cx="11" cy="7" r="4.200" fill="#333"/><circle cx="11" cy="7" r="2.300" fill="#9c9c9c"/></svg>
<div class="a" style="left:1454px;top:761px;width:1px;height:20px;background:#424242"></div>
<div class="a" style="left:1464px;top:758px;width:43px;height:26px;background:#242424"></div>
<div class="a" style="left:1469px;top:763px;font-size:15px;color:#8c8c8c">Filter</div>
<div class="a" style="left:1517px;top:762px;width:66px;overflow:hidden;font-size:15px;color:#a9a9a9">Default levels</div>
<div class="a" style="left:1594px;top:761px;width:1px;height:20px;background:#424242"></div>
<div class="a" style="left:1606px;top:762px;font-size:15px;color:#8a8a8a">6 hidden</div>
<svg style="left:1680px;top:761px" width="18" height="18" viewBox="0 0 20 20"><path d="M8.300 0h3.400l.5 2.700 1.700.7L16.200 2l2.400 2.400-1.500 2.300.7 1.700 2.700.5v3.400l-2.700.5-.7 1.700 1.500 2.300-2.400 2.400-2.300-1.500-1.700.7-.5 2.700H8.300l-.5-2.700-1.700-.7-2.300 1.500-2.400-2.400 1.500-2.300-.7-1.700L-.5 12.300V8.900l2.700-.5.7-1.700L1.400 4.400 3.800 2l2.300 1.400 1.700-.7z" fill="#a4a4a4"/><circle cx="10" cy="10.500" r="3.200" fill="#333"/></svg>
<!-- console body -->
<div class="a" style="left:1147px;top:788px;width:544px;height:200px;background:#242424"></div>
<div class="a" style="left:1691px;top:788px;width:17px;height:200px;background:#262626"></div>
<div class="a" style="left:1692px;top:868px;width:16px;height:117px;background:#3b3b3b"></div>
<div class="a" style="left:1147px;top:788px;width:544px;height:42px;background:#332b00;border-bottom:1px solid #65540a"></div>
<div class="a" style="left:1147px;top:855px;width:544px;height:1px;background:#3a3a3a"></div>
<div class="a" style="left:1147px;top:898px;width:544px;height:42px;background:#332b00;border-top:1px solid #65540a;border-bottom:1px solid #65540a"></div>
<div class="a" style="left:1164px;top:788px;width:1px;height:66px;background:#4e4e4e"></div>
<div class="a" style="left:1164px;top:899px;width:1px;height:40px;background:#5a4e1a"></div>
<svg style="left:1171px;top:791px" width="15" height="14" viewBox="0 0 15 14"><path d="M7.500 .5l7 13H.5z" fill="#f5c518"/><path d="M7.500 5v4.500" stroke="#fff8dc" stroke-width="1.600"/><circle cx="7.500" cy="11.500" r=".9" fill="#fff8dc"/></svg>
<svg style="left:1171px;top:904px" width="15" height="14" viewBox="0 0 15 14"><path d="M7.500 .5l7 13H.5z" fill="#f5c518"/><path d="M7.500 5v4.500" stroke="#fff8dc" stroke-width="1.600"/><circle cx="7.500" cy="11.500" r=".9" fill="#fff8dc"/></svg>
<svg style="left:1196px;top:795px" width="6" height="9" viewBox="0 0 6 9"><path d="M0 0v9l6-4.500z" fill="#8c8c8c"/></svg>
<div class="cl" style="left:1205px;top:792px">以下文件体积超过 <span class="cm" style="font-weight:bold">500KB</span>，已跳过压缩以及 <span class="cm" style="font-weight:bold">ES6</span> 转 <span class="cm" style="font-weight:bold">ES5</span></div>
<div class="cl" style="left:1194px;top:810px">的处理。</div>
<div class="vm" style="top:794px">VM17:1</div>
<div class="cl" style="left:1193px;top:836px;color:#d8d8d8"><span class="cm">utils/poemData.js</span></div>
<div class="vm" style="top:838px">VM39:5</div>
<svg style="left:1159px;top:864px" width="9" height="7" viewBox="0 0 9 7"><path d="M0 0h9L4.500 7z" fill="#8c8c8c"/></svg>
<div class="cl" style="left:1176px;top:861px;color:#dcdcdc;font-weight:bold"><span class="cm">Wed Sep 15 2021 22:06:36 GMT+0800 (</span>中国标准时间<span class="cm">)</span></div>
<div class="cl" style="left:1176px;top:879px;color:#dcdcdc;font-weight:bold"><span class="cm">sitemap </span>索引情况提示</div>
<div class="vm" style="top:863px;font-weight:bold">VM43:4</div>
<svg style="left:1196px;top:908px" width="6" height="9" viewBox="0 0 6 9"><path d="M0 0v9l6-4.500z" fill="#8c8c8c"/></svg>
<div class="cl" style="left:1215px;top:905px">根据 <span class="cm">sitemap</span> 的规则<span class="cm">[0]</span>，当前页面</div>
<div class="cl" style="left:1194px;top:923px"><span class="cm">[pages/poemDetail/poemDetail?poemid=10463]</span> 将被索引</div>
<div class="vm" style="top:907px">VM17:1</div>
<svg style="left:1157px;top:948px" width="7" height="10" viewBox="0 0 7 10"><path d="M1 1l4.500 4L1 9" fill="none" stroke="#3b7ce8" stroke-width="1.800"/></svg>
</body>
</html>
